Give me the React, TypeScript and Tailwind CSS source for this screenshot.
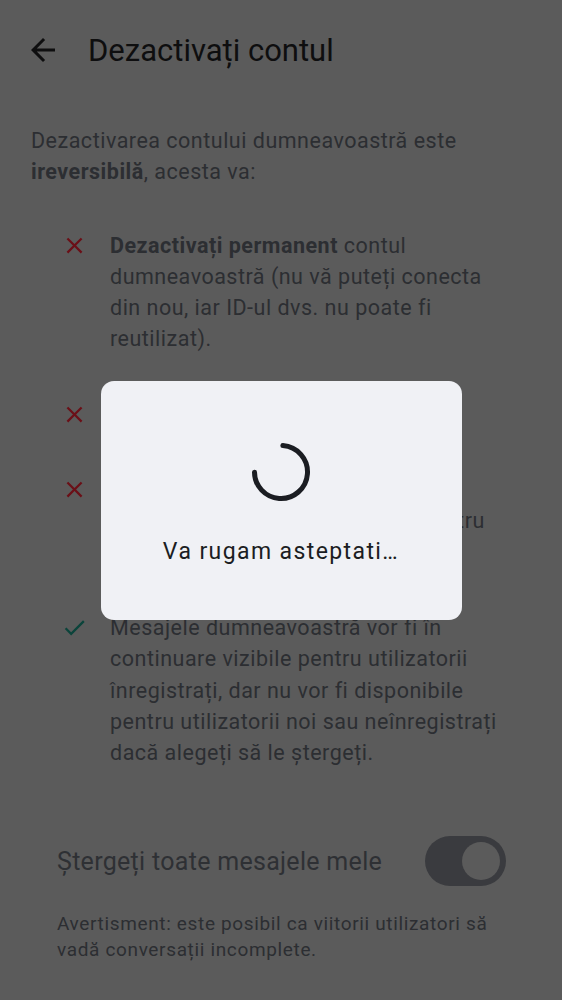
import React from "react";

const XIcon = () => (
  <svg width="27" height="27" viewBox="0 0 24 24" className="shrink-0">
    <path
      d="M19 6.41L17.59 5 12 10.59 6.41 5 5 6.41 10.59 12 5 17.59 6.41 19 12 13.41 17.59 19 19 17.59 13.41 12z"
      fill="#6b0f17"
    />
  </svg>
);

const CheckIcon = () => (
  <svg width="27" height="27" viewBox="0 0 24 24" className="shrink-0">
    <path d="M9 16.17L4.83 12l-1.42 1.41L9 19 21 7l-1.41-1.41z" fill="#0b443b" />
  </svg>
);

function Item({ icon, children }: { icon: React.ReactNode; children: React.ReactNode }) {
  return (
    <div className="flex items-start">
      <div className="w-[110px] shrink-0 flex justify-end pr-[22px] pt-[2px]">{icon}</div>
      <p className="flex-1 text-[21.5px] leading-[31.3px] tracking-[0.5px] text-[#2c2e32] pr-[52px]">
        {children}
      </p>
    </div>
  );
}

export default function App() {
  return (
    <div
      className="relative w-[562px] h-[1000px] overflow-hidden bg-[#5b5b5b]"
      style={{ fontFamily: "Roboto, 'Noto Sans', sans-serif" }}
    >
      {/* Header */}
      <div className="h-[100px] flex items-center pl-[25px]">
        <svg width="36" height="36" viewBox="0 0 24 24">
          <path d="M20 11H7.83l5.59-5.59L12 4l-8 8 8 8 1.41-1.41L7.83 13H20v-2z" fill="#0e0e0f" />
        </svg>
        <h1 className="ml-[27px] text-[31px] text-[#0e0e0f] leading-none">Dezactivați contul</h1>
      </div>

      {/* Intro */}
      <p className="mt-[25px] px-[31px] text-[21.5px] leading-[31.3px] tracking-[0.5px] text-[#2c2e32]">
        Dezactivarea contului dumneavoastră este <b className="font-bold">ireversibilă</b>, acesta va:
      </p>

      {/* List */}
      <div className="mt-[42px] flex flex-col gap-[44px]">
        <Item icon={<XIcon />}>
          <b className="font-bold">Dezactivați permanent</b> contul dumneavoastră (nu vă puteți conecta
          din nou, iar ID-ul dvs. nu poate fi reutilizat).
        </Item>
        <Item icon={<XIcon />}>Vă elimină din toate camerele.</Item>
        <Item icon={<XIcon />}>
          Ștergeți informațiile contului dvs.
          <br />
          din serverul de identitate setat pentru
          <br />
          căutarea contactelor.
        </Item>
        <Item icon={<CheckIcon />}>
          Mesajele dumneavoastră vor fi în continuare vizibile pentru utilizatorii înregistrați, dar nu vor
          fi disponibile pentru utilizatorii noi sau neînregistrați dacă alegeți să le ștergeți.
        </Item>
      </div>

      {/* Toggle row */}
      <div className="mt-[68px] flex items-center justify-between pl-[57px] pr-[56px]">
        <span className="text-[25px] tracking-[0.3px] text-[#2e3034] leading-none">
          Ștergeți toate mesajele mele
        </span>
        <div className="w-[81px] h-[50px] rounded-full bg-[#3a3b3f] flex items-center justify-end pr-[6px]">
          <div className="w-[38px] h-[38px] rounded-full bg-[#5b5b5b]" />
        </div>
      </div>

      <p className="mt-[25px] pl-[57px] pr-[57px] text-[19px] leading-[26px] tracking-[0.65px] text-[#2c2e32]">
        Avertisment: este posibil ca viitorii utilizatori să vadă conversații incomplete.
      </p>

      {/* Loading dialog */}
      <div className="absolute inset-0 flex items-center justify-center">
        <div className="w-[361px] h-[239px] rounded-[13px] bg-[#f0f1f5] flex flex-col items-center pt-[60px]">
          <svg width="62" height="62" viewBox="0 0 62 62">
            <circle
              cx="31"
              cy="31"
              r="26.5"
              fill="none"
              stroke="#1b1d22"
              strokeWidth="5"
              strokeLinecap="round"
              strokeDasharray="122 200"
              transform="rotate(-86 31 31)"
            />
          </svg>
          <span className="mt-[37px] text-[23px] tracking-[1.4px] text-[#1b1d22] leading-none">
            Va rugam asteptati…
          </span>
        </div>
      </div>
    </div>
  );
}
